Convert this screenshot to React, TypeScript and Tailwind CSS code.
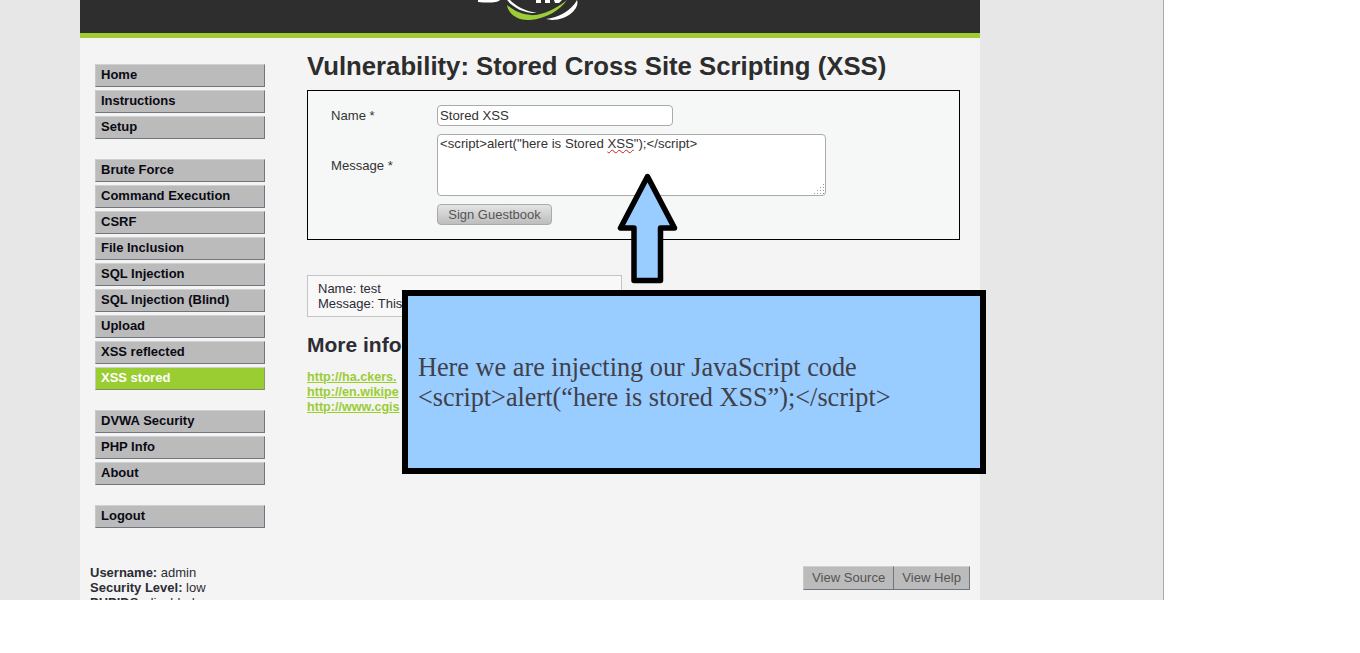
const font = { fontFamily: '"Liberation Sans", Arial, sans-serif' };

const navGroups = [
  ["Home", "Instructions", "Setup"],
  [
    "Brute Force",
    "Command Execution",
    "CSRF",
    "File Inclusion",
    "SQL Injection",
    "SQL Injection (Blind)",
    "Upload",
    "XSS reflected",
    "XSS stored",
  ],
  ["DVWA Security", "PHP Info", "About"],
  ["Logout"],
];

function NavItem({ label }: { label: string }) {
  const active = label === "XSS stored";
  return (
    <div
      className={
        "h-[23px] mb-[3px] pl-[5px] border border-t-[#d0d0d0] border-l-[#c8c8c8] text-[13px] leading-[20px] font-bold " +
        (active
          ? "bg-[#9acd32] text-white border-r-[#8a9a70] border-b-[#7f8f6a]"
          : "bg-[#bbbbbb] text-[#0a0a14] border-r-[#70757f] border-b-[#70757f]")
      }
    >
      {label}
    </div>
  );
}

function Logo() {
  return (
    <svg className="absolute left-[470px] top-0" width="120" height="33" viewBox="0 0 120 33">
      <path d="M8 0 H30 C27 3 18 3 8 2 Z" fill="#fff" />
      <path d="M66 0 H71 V3 H66 Z M75 0 H80 V3 H75 Z M84 0 H92 L89 3 H85 Z" fill="#fff" />
      <path d="M40 0 C46 6 54 11 67 13 C52 13 43 7 37 0 Z" fill="#fff" />
      <path d="M37 5 C38 14 48 21 60 20 C76 19 90 10 97 0 C90 6 78 13 66 15 C54 16 44 11 37 5 Z" fill="#9ccc38" />
      <path d="M76 19 C88 18 102 10 107 0 C110 8 98 20 82 20 Z" fill="#fff" />
    </svg>
  );
}

function Sidebar() {
  return (
    <div className="w-[227px] shrink-0 pl-[15px] pt-[26px]">
      {navGroups.map((group) => (
        <div key={group[0]} className="w-[170px] mb-[20px]">
          {group.map((label) => (
            <NavItem key={label} label={label} />
          ))}
        </div>
      ))}
      <div className="-ml-[5px] mt-[37px] text-[13px] leading-[15px] text-[#2c2c34]">
        <div><b>Username:</b> admin</div>
        <div><b>Security Level:</b> low</div>
        <div><b>PHPIDS:</b> disabled</div>
      </div>
    </div>
  );
}

function GuestbookForm() {
  return (
    <div className="w-[653px] h-[150px] mt-[9px] border border-black bg-[#f6f7f7] pl-[23px] pt-[14px] text-[13.1px] text-[#333]">
      <div className="flex items-center h-[21px]">
        <div className="w-[106px]">Name *</div>
        <input
          readOnly
          value="Stored XSS"
          className="w-[236px] h-[21px] rounded-[4px] border border-[#aaa] bg-white px-[2px] text-[13.2px] text-[#333] outline-none"
        />
      </div>
      <div className="flex items-center h-[62px] mt-[8px]">
        <div className="w-[106px] pt-[1px]">Message *</div>
        <div className="relative w-[389px] h-[62px] rounded-[4px] border border-[#aaa] bg-white px-[2px] pt-[1px] text-[13.2px] leading-[15px] text-[#333]">
          {'<script>alert("here is Stored '}
          <span className="underline decoration-wavy decoration-[#c02020] decoration-1">XSS</span>
          {'");</script>'}
          <svg className="absolute right-[1px] bottom-[1px]" width="11" height="11" viewBox="0 0 11 11">
            <path d="M10 1h1v1h-1zM7 4h1v1H7zM10 4h1v1h-1zM4 7h1v1H4zM7 7h1v1H7zM10 7h1v1h-1zM1 10h1v1H1zM4 10h1v1H4zM7 10h1v1H7zM10 10h1v1h-1z" fill="#999" />
          </svg>
        </div>
      </div>
      <button className="block ml-[106px] mt-[8px] w-[115px] h-[21px] rounded-[4px] border border-[#aaa] bg-gradient-to-b from-[#e4e4e4] to-[#bdbdbd] text-[13px] leading-[18px] text-[#555]">
        Sign Guestbook
      </button>
    </div>
  );
}

function Content() {
  return (
    <div className="flex-1 pt-[13px] text-[#2c2c34]">
      <h1 className="text-[25.73px] leading-[30px] font-bold text-[#2d2d2d] whitespace-nowrap">
        Vulnerability: Stored Cross Site Scripting (XSS)
      </h1>
      <GuestbookForm />
      <div className="w-[315px] h-[42px] mt-[35px] border border-[#c4c4c4] bg-[#f8f8f8] pl-[10px] pt-[5px] text-[13px] leading-[15px] whitespace-nowrap">
        <div>Name: test</div>
        <div>Message: This</div>
      </div>
      <h2 className="mt-[15px] whitespace-nowrap text-[21px] leading-[26px] font-bold text-[#2c2c34]">
        More info
      </h2>
      <div className="mt-[12px] whitespace-nowrap text-[12.6px] leading-[15px] font-bold text-[#9acd32] underline">
        <div>http://ha.ckers.</div>
        <div>http://en.wikipe</div>
        <div>http://www.cgis</div>
      </div>
      <div className="flex justify-end mr-[10px] mt-[151px] text-[13.1px] text-[#555]">
        <div className="h-[24px] px-[8px] bg-[#bbbbbb] border-t border-t-[#d0d0d0] border-b border-b-[#70757f] border-l border-l-[#c8c8c8] leading-[22px]">
          View Source
        </div>
        <div className="h-[24px] px-[8px] bg-[#bbbbbb] border border-t-[#d0d0d0] border-b-[#70757f] border-x-[#70757f] leading-[22px]">
          View Help
        </div>
      </div>
    </div>
  );
}

function Callout() {
  return (
    <>
      <div
        className="absolute left-[402px] top-[290px] w-[584px] h-[184px] border-[6px] border-black bg-[#99ccff] pl-[10px] pt-[57px] text-[26.25px] leading-[30px] text-[#40404a] whitespace-nowrap"
        style={{ fontFamily: '"Liberation Serif", "Times New Roman", serif' }}
      >
        <div>Here we are injecting our JavaScript code</div>
        <div>{"<script>alert(“here is stored XSS”);</script>"}</div>
      </div>
      <svg className="absolute left-[610px] top-[170px]" width="76" height="116" viewBox="610 170 76 116">
        <polygon
          points="647.5,176.5 620.5,228 634,228 634,280.5 660.5,280.5 660.5,228 674.5,228"
          fill="#99ccff"
          stroke="#000"
          strokeWidth="5.5"
          strokeLinejoin="round"
        />
      </svg>
    </>
  );
}

export default function App() {
  return (
    <div className="relative h-[600px] w-[1164px] overflow-hidden border-r border-r-[#a8a8a8] bg-[#e7e7e7]" style={font}>
      <div className="ml-[80px] w-[900px] h-full bg-[#f4f4f4]">
        <div className="h-[38px] bg-[#2e2e2e] border-b-[5px] border-b-[#9fcd33]" />
        <div className="flex">
          <Sidebar />
          <Content />
        </div>
      </div>
      <Logo />
      <Callout />
    </div>
  );
}
